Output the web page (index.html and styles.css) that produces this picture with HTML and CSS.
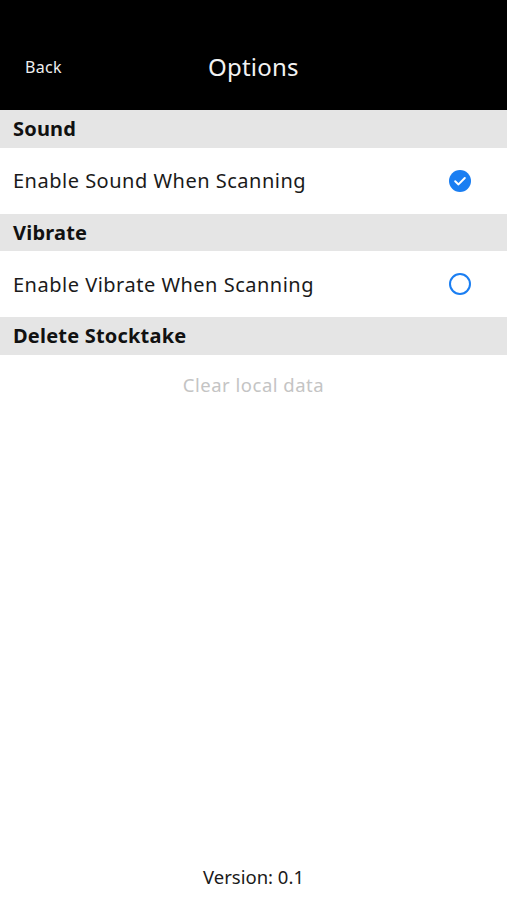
FILE: index.html
```html
<!DOCTYPE html>
<html>
<head>
<meta charset="utf-8">
<link rel="stylesheet" href="styles.css">
</head>
<body>
<div class="screen">
  <header class="topbar">
    <span class="back">Back</span>
    <span class="title">Options</span>
  </header>
  <div class="section">Sound</div>
  <div class="row">
    <span class="label">Enable Sound When Scanning</span>
    <svg class="radio" width="24" height="24" viewBox="0 0 24 24">
      <circle cx="12" cy="12" r="11" fill="#1a7ef2"/>
      <path d="M7.2 12.3 L10.5 15.4 L16.8 9" fill="none" stroke="#fff" stroke-width="2" stroke-linecap="round" stroke-linejoin="round"/>
    </svg>
  </div>
  <div class="section">Vibrate</div>
  <div class="row">
    <span class="label">Enable Vibrate When Scanning</span>
    <svg class="radio" width="24" height="24" viewBox="0 0 24 24">
      <circle cx="12" cy="12" r="10" fill="none" stroke="#1a7ef2" stroke-width="2"/>
    </svg>
  </div>
  <div class="section">Delete Stocktake</div>
  <div class="clear">Clear local data</div>
  <div class="version">Version: 0.1</div>
</div>
</body>
</html>
```
FILE: styles.css
```css
* { box-sizing: border-box; }
html, body { margin: 0; padding: 0; }
body {
  font-family: "Noto Sans", "Lato", sans-serif;
  background: #fff;
  color: #111;
}
.screen {
  width: 507px;
  height: 900px;
  display: flex;
  flex-direction: column;
}
.topbar {
  height: 110px;
  flex: none;
  background: #000;
  color: #fff;
  display: flex;
  align-items: center;
  padding-top: 23px;
}
.back {
  width: 208px;
  padding-left: 25px;
  font-size: 16px;
  letter-spacing: 0.3px;
  color: #eee;
}
.title {
  font-size: 24px;
  letter-spacing: 0.2px;
  color: #f2f2f2;
}
.section {
  height: 37.5px;
  flex: none;
  background: #e5e5e5;
  font-weight: 700;
  font-size: 20px;
  letter-spacing: 0.2px;
  padding-left: 13px;
  display: flex;
  align-items: center;
}
.row {
  height: 66px;
  flex: none;
  display: flex;
  align-items: center;
  justify-content: space-between;
  padding-left: 13px;
  padding-right: 35px;
}
.label {
  font-size: 20px;
  letter-spacing: 0.5px;
  color: #1a1a1a;
}
.radio { display: block; }
.clear {
  text-align: center;
  color: #c4c4c4;
  font-size: 18.5px;
  letter-spacing: 0.5px;
  padding-top: 17px;
}
.version {
  margin-top: auto;
  text-align: center;
  font-size: 18.5px;
  color: #1a1a1a;
  padding-bottom: 11px;
}
```
